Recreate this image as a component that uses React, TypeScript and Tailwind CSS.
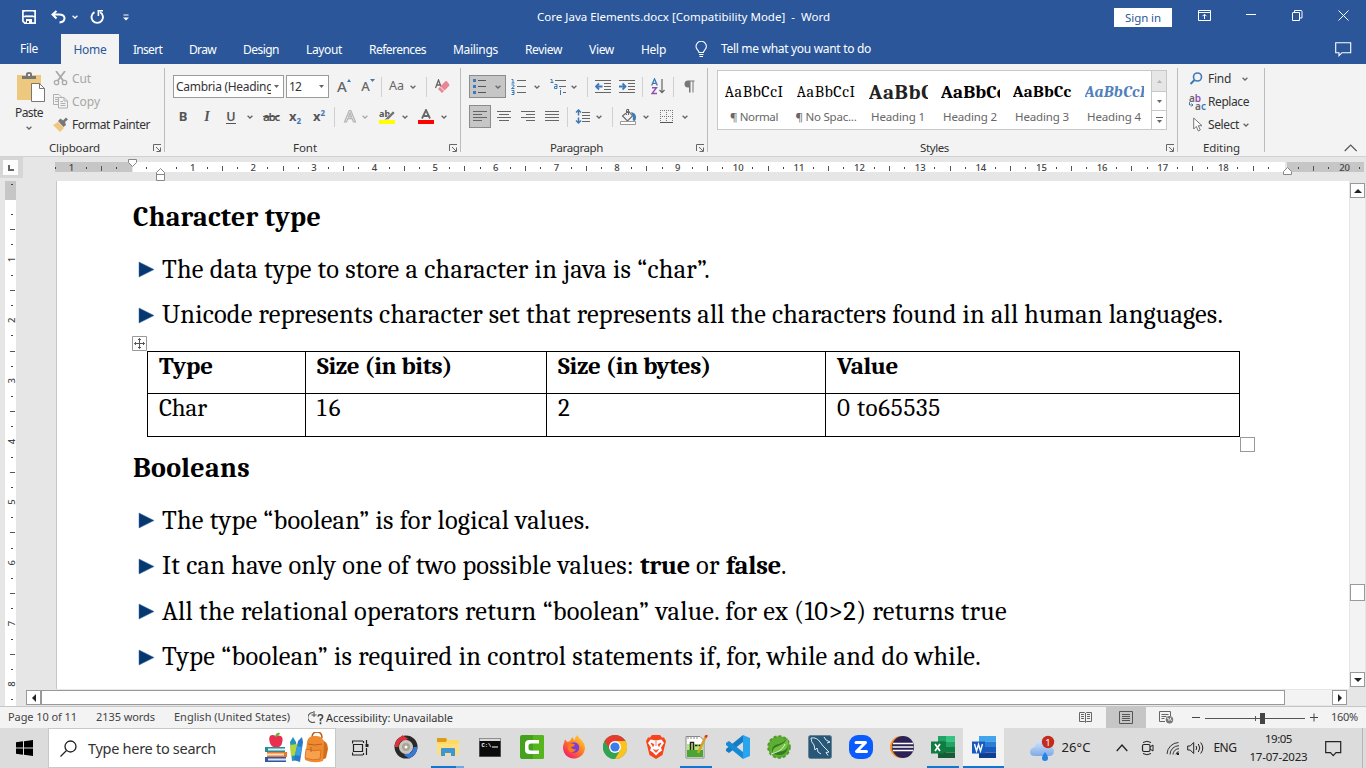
import React, { useLayoutEffect, useRef } from "react";

type P = { children?: React.ReactNode; className?: string };

/* Text run whose tracking is computed so that it spans a given width. */
function Fit({ w, className = "", children }: P & { w: number }) {
  const ref = useRef<HTMLSpanElement>(null);
  useLayoutEffect(() => {
    const el = ref.current;
    if (!el) return;
    el.style.letterSpacing = "0px";
    const natural = el.getBoundingClientRect().width;
    const n = (el.textContent || " ").length;
    el.style.letterSpacing = (w - natural) / n + "px";
  }, [w]);
  return (
    <span ref={ref} className={"inline-block shrink-0 whitespace-nowrap " + className}>
      {children}
    </span>
  );
}

function Ic({ w, h, className = "", children }: P & { w: number; h: number }) {
  return (
    <svg width={w} height={h} viewBox={`0 0 ${w} ${h}`} fill="none" className={"block shrink-0 " + className}>
      {children}
    </svg>
  );
}

const Cell = ({ className = "", children }: P) => (
  <div className={"flex h-full shrink-0 items-center justify-center " + className}>{children}</div>
);

const Chev = ({ className = "", c = "#666" }: { className?: string; c?: string }) => (
  <Cell className={"w-2 " + className}>
    <Ic w={6} h={4}>
      <path d="M.6.7 3 3 5.4.7" stroke={c} strokeWidth="1.3" />
    </Ic>
  </Cell>
);

const Sep = ({ className = "" }: P) => <div className={"h-5 w-px shrink-0 bg-[#d0d0d0] " + className} />;

const Launcher = ({ className = "" }: P) => (
  <Ic w={9} h={9} className={className}>
    <path d="M.5 7V.5H8M3 3l4 4M7.500 3.500v4h-4" stroke="#666" />
  </Ic>
);

function Group({ className = "", label, lw, pad, launcher = true, children }: P & { label: string; lw: number; pad: string; launcher?: boolean }) {
  return (
    <div className={"flex h-[92px] shrink-0 " + className}>
      <div className="flex min-w-0 flex-1 flex-col">
        <div className="h-[76px]">{children}</div>
        <div className={"flex h-4 items-center " + pad}>
          <Fit w={lw} className="text-[11.5px] leading-4 text-[#333]">{label}</Fit>
          {launcher && <Launcher className="mr-[2px] ml-auto" />}
        </div>
      </div>
      <div className="mt-1 h-[84px] w-px bg-[#bcbcbc]" />
    </div>
  );
}

function TitleBar() {
  return (
    <div className="flex h-[34px] items-center text-white">
      <Ic w={14} h={14} className="ml-[22px]">
        <path d="M.9.9h12.200v12.200H2.800L.9 11.200z" stroke="#fff" strokeWidth="1.7" />
        <path d="M3 1h8v5H3zM4 9h6v4H4z" fill="#fff" />
        <path d="M3 1.500h8v4H3z" fill="#2b579a" />
        <path d="M5 11h2v2H5z" fill="#2b579a" />
        <path d="M1 6.500h12" stroke="#fff" strokeWidth="1.500" />
      </Ic>
      <Ic w={15} h={14} className="ml-[15px]">
        <path d="M5.500 1 1.500 4.500l4 4M1.500 4.500h6.500c7.500 0 7 7.500.5 8" stroke="#fff" strokeWidth="2" />
      </Ic>
      <Chev c="#fff" className="ml-[5px]" />
      <Ic w={14} h={14} className="ml-[11px]">
        <path d="M4.500 2.200a5.700 5.700 0 1 0 5.500 0" stroke="#fff" strokeWidth="1.900" />
        <path d="M7.500.8h5.500M8.400.5v5.500" stroke="#fff" strokeWidth="1.600" />
      </Ic>
      <Ic w={6} h={7} className="ml-[19px]">
        <path d="M.5 1h5" stroke="#fff" />
        <path d="M0 3.500h6L3 6.500z" fill="#fff" />
      </Ic>
      <Fit w={293} className="ml-[408px] text-[11.5px]">Core Java Elements.docx [Compatibility Mode]&nbsp; -&nbsp; Word</Fit>
      <div className="ml-[284px] flex h-[19px] w-[58px] items-center justify-center bg-white pt-px">
        <Fit w={36} className="text-[11.5px] text-[#2b579a]">Sign in</Fit>
      </div>
      <Ic w={13} h={11} className="mb-1 ml-[26px]">
        <path d="M.5.5h12v10H.5zM.5 2.500h12M6.500 9V4.500M4.500 6.200l2-2 2 2" stroke="#fff" />
      </Ic>
      <Ic w={10} h={11} className="mb-1 ml-[35px]"><path d="M0 4.500h10" stroke="#fff" /></Ic>
      <Ic w={11} h={11} className="mb-1 ml-[36px]">
        <path d="M.5 3A.5.5 0 0 1 1 2.500h6.500V10.500H.5zM2.500 2.500v-2H9a1 1 0 0 1 1 1V8H8" stroke="#fff" />
      </Ic>
      <Ic w={11} h={11} className="mb-1 ml-[35px]"><path d="m.5.5 10 10m0-10-10 10" stroke="#fff" /></Ic>
    </div>
  );
}

function Tabs() {
  const rest: [string, number][] = [["Insert", 29], ["Draw", 27], ["Design", 36], ["Layout", 36], ["References", 57], ["Mailings", 45], ["Review", 37], ["View", 25], ["Help", 25]];
  return (
    <div className="flex h-[30px] items-center text-[12px] text-white">
      <Fit w={18} className="ml-5">File</Fit>
      <div className="ml-[23px] flex h-full w-[58px] items-center justify-center bg-[#f3f3f3] pt-[2px] text-[#2b579a]">
        <Fit w={33}>Home</Fit>
      </div>
      <div className="ml-[14px] flex items-center gap-[27px] pt-[2px]">
        {rest.map(([t, w]) => <Fit key={t} w={w}>{t}</Fit>)}
      </div>
      <Ic w={13} h={17} className="ml-[29px]">
        <path d="M4 11.500c0-2-3-3-3-6a5.200 5.200 0 0 1 10.400 0c0 3-3 4-3 6zM4 13.500h4.500M4.500 15.500h3.500" stroke="#fff" strokeWidth="1.100" />
      </Ic>
      <Fit w={150} className="ml-[13px]">Tell me what you want to do</Fit>
      <Ic w={17} h={15} className="ml-[464px]">
        <path d="M.7.7h15v10H7l-3 3v-3H.7z" stroke="#fff" strokeWidth="1.100" />
      </Ic>
    </div>
  );
}

function Clipboard() {
  return (
    <Group className="w-[165px]" label="Clipboard" lw={51} pad="pl-[49px]">
      <div className="flex h-full text-[12px]">
        <div className="flex w-[53px] flex-col pt-2 pl-[15px]">
          <Ic w={30} h={31} className="ml-[1px]">
            <path d="M1 3h24v25H1z" fill="#edc87e" />
            <path d="M6 7V4h4V2q0-2 3-2t3 2v2h4v3z" fill="#777" />
            <path d="M12 2h2v2h-2z" fill="#f3f3f3" />
            <path d="M15.500 11.500h8l5 5v13h-13z" fill="#fff" stroke="#777" />
            <path d="M23.500 11.500v5h5" stroke="#777" />
          </Ic>
          <Fit w={28} className="mt-px self-start leading-[18px] text-[#333]">Paste</Fit>
          <div className="flex h-3 w-7 justify-center"><Chev /></div>
        </div>
        <div className="flex flex-col pt-[3px]">
          <div className="flex h-[23px] items-center gap-1 text-[#a6a6a6]">
            <Ic w={15} h={15}>
              <path d="m3 0 7.500 10M12 0 4.500 10" stroke="#aaa" strokeWidth="1.800" />
              <circle cx="3.500" cy="11.500" r="2.200" stroke="#aaa" strokeWidth="1.300" />
              <circle cx="11.500" cy="11.500" r="2.200" stroke="#aaa" strokeWidth="1.300" />
            </Ic>
            <Fit w={19}>Cut</Fit>
          </div>
          <div className="flex h-[23px] items-center gap-1 text-[#a6a6a6]">
            <Ic w={15} h={15}>
              <path d="M5 10.500H.5V.5H6L8.500 3M2 3.500h3M2 5.500h3M2 7.500h3" stroke="#b0b0b0" />
              <path d="M5.500 3.500h5.500l3.500 3.500v7h-9zM11 3.500V7h3.500M7.500 7.500H10M7.500 9.500h5M7.500 11.500h5" stroke="#b0b0b0" />
            </Ic>
            <Fit w={28}>Copy</Fit>
          </div>
          <div className="flex h-[23px] items-center gap-1 text-[#333]">
            <Ic w={15} h={15}>
              <path d="m0 8 5-3 6 6-4 4z" fill="#edc87e" />
              <path d="m5 4 2.500-2.500 2.500 2L13 .5l2 2L12 5l1 3-2.500 2z" fill="#777" />
            </Ic>
            <Fit w={78}>Format Painter</Fit>
          </div>
        </div>
      </div>
    </Group>
  );
}

const Combo = ({ className = "", children }: P) => (
  <div className={"flex h-[23px] shrink-0 items-center border border-[#9a9a9a] bg-white " + className}>
    <div className="min-w-0 flex-1 overflow-hidden pl-[2px] text-[12px] text-[#333]">{children}</div>
    <Ic w={5} h={3} className="mr-1 ml-[3px]"><path d="M0 0h5L2.500 3z" fill="#666" /></Ic>
  </div>
);

function FontGroup() {
  return (
    <Group className="w-[296px]" label="Font" lw={24} pad="pl-[128px]">
      <div className="pt-[10px] pl-2">
        <div className="flex h-[25px] items-center text-[#666]">
          <Combo className="w-[111px]"><Fit w={106}>Cambria (Headings)</Fit></Combo>
          <Combo className="ml-[2px] w-[43px]"><Fit w={12}>12</Fit></Combo>
          <Cell className="ml-2 w-[14px] text-[15px] font-medium">
            A<Ic w={4} h={3} className="mb-3"><path d="M0 3h4L2 0z" fill="#3f7ab8" /></Ic>
          </Cell>
          <Cell className="ml-[10px] w-[14px] text-[13px] font-medium">
            A<Ic w={5} h={3} className="mb-3"><path d="M0 0h5L2.500 3z" fill="#3f7ab8" /></Ic>
          </Cell>
          <Sep className="ml-[6px]" />
          <Fit w={15} className="ml-[7px] text-[12.5px]">Aa</Fit>
          <Chev className="ml-[5px]" />
          <Sep className="ml-[9px]" />
          <Ic w={15} h={15} className="ml-[8px]">
            <path d="m.5 9 3-8 3 8M1.500 6h4" stroke="#666" strokeWidth="1.300" />
            <path d="m3 10 7-7.500q1-1 2 0l2 2.500q1 1 0 2l-7 7z" fill="#eb8591" />
            <path d="m5 7.500 4.500 4.500" stroke="#f3f3f3" />
          </Ic>
        </div>
        <div className="mt-[5px] -ml-[2px] flex h-[25px] items-center text-[13px] text-[#555]">
          <Cell className="w-6 font-bold">B</Cell>
          <Cell className="w-6 font-['Liberation_Serif'] text-[14px] font-bold italic">I</Cell>
          <Cell className="w-6"><span className="border-b border-[#555] text-[12.5px] leading-[13px] font-semibold">U</span></Cell>
          <Chev className="ml-[3px]" />
          <Cell className="ml-[5px] w-[24px]"><Fit w={16} className="text-[11.500px] font-semibold line-through">abc</Fit></Cell>
          <Cell className="w-[24px] font-bold">x<span className="mt-2 text-[8px] text-[#3f7ab8]">2</span></Cell>
          <Cell className="w-[24px] font-bold">x<span className="mb-2 text-[8px] text-[#3f7ab8]">2</span></Cell>
          <Sep className="ml-[3px]" />
          <Ic w={14} h={15} className="ml-2">
            <path d="M1.500 13 6.200 1.500h1.600L12.500 13h-2l-1.300-3.300H4.800L3.500 13zM5.500 7.800h3L7 4z" stroke="#b3b3b3" strokeWidth="1.200" />
          </Ic>
          <Chev c="#aaa" className="ml-1" />
          <Ic w={16} h={15} className="ml-[10px]">
            <text x="0" y="8" fontSize="9" fontWeight="700" fill="#555" fontFamily="Noto Sans">ab</text>
            <path d="m14 2 2 2-6.500 6.500-4.500.5z" fill="#777" stroke="#f3f3f3" strokeWidth=".6" />
            <path d="M0 11h16v4H0z" fill="#ff0" />
          </Ic>
          <Chev className="ml-[6px]" />
          <Ic w={16} h={15} className="ml-[9px]">
            <path d="M4 9.500 8 1l4 8.500M5.500 7h5" stroke="#666" strokeWidth="1.800" />
            <path d="M0 11h16v4H0z" fill="red" />
          </Ic>
          <Chev className="ml-[6px]" />
        </div>
      </div>
    </Group>
  );
}

const Lines = ({ d }: { d: string }) => <Ic w={14} h={13}><path d={d} stroke="#666" /></Ic>;

function ParagraphGroup() {
  return (
    <Group className="w-[247px]" label="Paragraph" lw={53} pad="pl-[89px]">
      <div className="pt-[10px] pl-2">
        <div className="flex h-[25px] items-center">
          <div className="flex h-[23px] w-[37px] shrink-0 items-center border border-[#8c8c8c] bg-[#c6c6c6] pl-[3px]">
            <Ic w={14} h={17}>
              <path d="M5 2.500h8M5 8.500h8M5 14.500h8" stroke="#555" />
              <path d="M0 1h3v3H0zM0 7h3v3H0zM0 13h3v3H0z" fill="#3f7ab8" />
            </Ic>
            <Chev className="ml-[7px]" />
          </div>
          <Ic w={15} h={17} className="ml-[5px]">
            <path d="M6 2.500h9M6 8.500h9M6 14.500h9" stroke="#666" />
            <path d="M.5 1.500H2V5M.5 5h3M.5 7h2.500v1.500L.5 10.500h3M.5 12.500H3v4H.5M1 14.500h2" stroke="#3f7ab8" />
          </Ic>
          <Chev className="ml-[7px]" />
          <Ic w={17} h={17} className="ml-[9px]">
            <path d="M5 2.500h11M9 8.500h7M13 14.500h3" stroke="#666" />
            <path d="M.5 1.500H2V5M.5 4.500h3M4.500 6.500h2.500v4H4.500v-2H7M10.500 12v5M10.500 10v1" stroke="#3f7ab8" />
          </Ic>
          <Chev className="ml-[3px]" />
          <Sep className="ml-[9px]" />
          <Ic w={16} h={13} className="ml-[7px]">
            <path d="M0 .5h16M9 3.500h7M9 6.500h7M9 9.500h7M0 12.500h16" stroke="#666" />
            <path d="M7.500 6.500H1.500M4 3.500l-3 3 3 3" stroke="#3f7ab8" strokeWidth="1.800" />
          </Ic>
          <Ic w={16} h={13} className="ml-[8px]">
            <path d="M0 .5h16M9 3.500h7M9 6.500h7M9 9.500h7M0 12.500h16" stroke="#666" />
            <path d="M0 6.500h6M3.500 3.500l3 3-3 3" stroke="#3f7ab8" strokeWidth="1.800" />
          </Ic>
          <Sep className="ml-[7px]" />
          <Ic w={14} h={17} className="ml-[8px]">
            <path d="M.7 7.500 3.500.8l2.800 6.700M1.700 5.300h3.700" stroke="#3f7ab8" strokeWidth="1.300" />
            <path d="M1 9.700h4.500L1 15.500h5" stroke="#8f4fb0" strokeWidth="1.400" />
            <path d="M11 1v13.500M8.500 12l2.500 2.700 2.500-2.700" stroke="#666" strokeWidth="1.200" />
          </Ic>
          <Sep className="ml-[8px]" />
          <Ic w={11} h={13} className="ml-[10px]">
            <path d="M5 7.500H4A3.500 3.500 0 0 1 4 .5h6.500v1H9.500V12.500h-1v-11h-2v11H5z" fill="#777" />
          </Ic>
        </div>
        <div className="mt-[5px] flex h-[25px] items-center">
          <div className="flex h-[23px] w-[22px] shrink-0 items-center justify-center border border-[#8c8c8c] bg-[#c6c6c6]">
            <Lines d="M0 1.500h14M0 4.500h9M0 7.500h14M0 10.500h9" />
          </div>
          <div className="ml-[6px] flex gap-[10px]">
            <Lines d="M0 1.500h14M2 4.500h10M0 7.500h14M2 10.500h10" />
            <Lines d="M0 1.500h14M5 4.500h9M0 7.500h14M5 10.500h9" />
            <Lines d="M0 1.500h14M0 4.500h14M0 7.500h14M0 10.500h14" />
          </div>
          <Sep className="ml-[8px]" />
          <Ic w={15} h={15} className="ml-[7px]">
            <path d="M3.500 1v5.500M1 3.500 3.500 1 6 3.500M3.500 8.500V14M1 11.500 3.500 14 6 11.500" stroke="#3f7ab8" strokeWidth="1.500" />
            <path d="M7 3.500h8M7 6.500h8M7 9.500h8M7 12.500h8" stroke="#666" />
          </Ic>
          <Chev className="ml-[5px]" />
          <Sep className="ml-[9px]" />
          <Ic w={17} h={16} className="ml-[7px]">
            <path d="m2.500 7 6-5 4 5-5 5zM6.500 6V2q0-2 2-1.500V6" stroke="#666" strokeWidth="1.100" />
            <path d="M11 3q5 1 5 5t-2 4q-2-1-1-4z" fill="#3f7ab8" />
            <path d="M.5 12.500h15v3H.5z" fill="#fff" stroke="#999" />
          </Ic>
          <Chev className="ml-[5px]" />
          <Ic w={13} h={13} className="ml-[10px]">
            <path d="M0 .5h13M.5 0v13M12.500 0v13M6.500 0v13M0 6.500h13" stroke="#777" strokeDasharray="1 1" />
            <path d="M0 12.500h13" stroke="#555" />
          </Ic>
          <Chev className="ml-[8px]" />
        </div>
      </div>
    </Group>
  );
}

const serif = "font-[Cambria,Caladea,'Liberation_Serif',serif]";

function Styles() {
  const items: [string, string, string, number, number][] = [
    ["AaBbCcI", "¶ Normal", "text-[16px] text-black", 59, 48],
    ["AaBbCcI", "¶ No Spac...", "text-[16px] text-black", 59, 61],
    ["AaBbCc", "Heading 1", "text-[21px] font-bold text-[#222]", 75, 54],
    ["AaBbCc", "Heading 2", "text-[19px] font-bold text-black", 65, 54],
    ["AaBbCc", "Heading 3", "text-[17px] font-bold text-black", 59, 54],
    ["AaBbCcI", "Heading 4", "text-[16px] font-bold italic text-[#4f81bd]", 61, 54],
  ];
  return (
    <Group className="w-[470px]" label="Styles" lw={29} pad="pl-[212px]">
      <div className="pt-[6px] pl-[9px]">
        <div className="flex h-[60px] w-[450px] border border-[#c8c8c8] bg-white">
          {items.map(([s, l, c, w, lw]) => (
            <div key={l} className="flex w-[72px] shrink-0 flex-col items-center">
              <div className="mt-[8px] h-[28px] w-[59px] overflow-hidden">
                <Fit w={w} className={"leading-[26px] " + serif + " " + c}>{s}</Fit>
              </div>
              <Fit w={lw} className="mt-[2px] text-[11.500px] leading-4 text-[#666]">{l}</Fit>
            </div>
          ))}
          <div className="ml-auto flex w-[15px] flex-col border-l border-[#c8c8c8]">
            <div className="flex h-[21px] items-center justify-center border-b border-[#c8c8c8] bg-[#e6e6e6]">
              <Ic w={5} h={3}><path d="M0 3h5L2.500 0z" fill="#b5b5b5" /></Ic>
            </div>
            <div className="flex h-[19px] items-center justify-center border-b border-[#c8c8c8]">
              <Ic w={5} h={3}><path d="M0 0h5L2.500 3z" fill="#666" /></Ic>
            </div>
            <div className="flex flex-1 items-center justify-center">
              <Ic w={7} h={7}><path d="M0 .5h7" stroke="#666" /><path d="M1 3h5L3.500 6z" fill="#666" /></Ic>
            </div>
          </div>
        </div>
      </div>
    </Group>
  );
}

function Editing() {
  return (
    <Group className="w-[87px]" label="Editing" lw={37} pad="pl-[25px]" launcher={false}>
      <div className="flex flex-col pt-[3px] pl-[11px] text-[12px] text-[#333]">
        <div className="flex h-[23px] items-center">
          <Ic w={16} h={13}><circle cx="8.500" cy="5" r="4" stroke="#3f7ab8" strokeWidth="1.600" /><path d="m5.500 8-4 4" stroke="#3f7ab8" strokeWidth="2" /></Ic>
          <Fit w={23} className="ml-[3px]">Find</Fit>
          <Chev className="ml-[10px]" />
        </div>
        <div className="flex h-[23px] items-center">
          <div className="w-[17px] shrink-0 text-[10px] leading-[8px] font-semibold text-[#666]">
            <div className="flex">a<span className="text-[#8f4fb0]">b</span></div>
            <div className="flex justify-end">
              <Ic w={5} h={6} className="mr-px"><path d="M.5 0v3H4M2.500 1.500l1.500 1.500-1.500 1.500" stroke="#3f7ab8" /></Ic>
              a<span className="text-[#3f7ab8]">c</span>
            </div>
          </div>
          <Fit w={41} className="ml-[2px]">Replace</Fit>
        </div>
        <div className="flex h-[23px] items-center">
          <Ic w={13} h={15} className="ml-[4px]"><path d="M.7 1v11l2.600-2.600 2 4.600 2-1-2-4.300h3.700z" fill="#fff" stroke="#777" /></Ic>
          <Fit w={31} className="ml-[2px]">Select</Fit>
          <Chev className="ml-[3px]" />
        </div>
      </div>
    </Group>
  );
}

const U = 60.63;

function Ruler() {
  const marks: React.ReactNode[] = [];
  for (let q = -5; q <= 81; q++) {
    const x = 77 + (q * U) / 4;
    if (x > 1308 || q === 0 || q === 76 || q === 2) continue;
    if (q % 4 === 0)
      marks.push(<text key={q} x={x} y="9" fontSize="9.500" fontWeight="500" textAnchor="middle" fill="#444">{Math.abs(q / 4)}</text>);
    else if (q % 2 === 0) marks.push(<path key={q} d={`M${Math.round(x) - 0.5} 4v5`} stroke="#555" />);
    else marks.push(<path key={q} d={`M${Math.round(x) - 0.5} 5v2`} stroke="#444" />);
  }
  return (
    <div className="flex h-[24px] bg-[#e6e6e6]">
      <div className="flex h-[21px] w-[23px] items-center justify-center bg-[#d6d6d6] pr-[2px]">
        <div className="flex h-[15px] w-[15px] items-center justify-center bg-[#fcfcfc]">
          <Ic w={6} h={6}><path d="M1 0v5h5" stroke="#666" strokeWidth="2" /></Ic>
        </div>
      </div>
      <svg width="1309" height="24" viewBox="0 -5 1309 24" className="ml-8 block" fill="none">
        <path d="M0 0h77v10H0zM1232 0h77v10h-77z" fill="#c6c6c6" />
        <path d="M78 0h1152v10H78z" fill="#fff" />
        {marks}
        <path d="M73.500-2.500h8v3l-4 4-4-4z" fill="#fff" stroke="#888" />
        <path d="M101.500 18.500v-8l4-4 4 4v8zM101.500 12.500h8" fill="#fff" stroke="#888" />
        <path d="M1228.500 12.500v-3l4-4 4 4v3z" fill="#fff" stroke="#888" />
      </svg>
    </div>
  );
}

function SideRuler() {
  const marks: React.ReactNode[] = [];
  for (let q = -1; q <= 33; q++) {
    const y = 18 + (q * U) / 4;
    if (q === 0) continue;
    if (q % 4 === 0)
      marks.push(<text key={q} x="0" y="0" fontSize="9.500" fontWeight="500" textAnchor="middle" fill="#444" transform={`translate(9.500 ${y}) rotate(-90)`}>{q / 4}</text>);
    else if (q % 2 === 0) marks.push(<path key={q} d={`M5 ${Math.round(y) + 0.5}h5`} stroke="#555" />);
    else marks.push(<path key={q} d={`M6 ${Math.round(y) + 0.5}h2`} stroke="#444" />);
  }
  return (
    <svg width="11" height="525" viewBox="0 0 11 525" className="ml-[5px] block shrink-0" fill="none">
      <path d="M0 0h11v525H0z" fill="#fff" />
      <path d="M0 0h11v19H0z" fill="#c6c6c6" />
      {marks}
    </svg>
  );
}

const Item = ({ w, tail, children }: P & { w: number; tail?: React.ReactNode }) => (
  <div className="flex h-[45.5px] items-center">
    <Ic w={17} h={17} className="ml-[4.500px]">
      <path d="M1 1v15l15-7.500z" fill="#06386f" stroke="#3f6ea5" strokeWidth=".5" />
    </Ic>
    <Fit w={w} className="ml-[7.500px]">{children}</Fit>
    {tail}
  </div>
);

const Heading = ({ w, children }: P & { w: number }) => (
  <div className="flex h-[46px] items-center pt-px text-[28px] font-bold"><Fit w={w}>{children}</Fit></div>
);

function Doc() {
  const td = "border-r border-b border-black pl-[11px] h-full";
  return (
    <div className={"h-[508px] w-[1293px] border-l border-[#c6c6c6] bg-white pt-[12px] pl-[76px] text-[26.4px] text-black " + serif}>
      <Heading w={188}>Character type</Heading>
      <div className="mt-[8px]">
        <Item w={548}>The data type to store a character in java is “char”.</Item>
        <Item w={1061}>Unicode represents character set that represents all the characters found in all human languages.</Item>
      </div>
      <div className="relative mt-[13px] ml-[14px] w-[1093px] border-t border-l border-black text-[25px] leading-[28px]">
        <div className="absolute -top-[16px] -left-[16px]">
          <Ic w={15} h={15}>
            <path d="M.5.5h14v14H.5z" fill="#fff" stroke="#999" />
            <path d="M7.500 2.500v10M2.500 7.500h10M6 4l1.500-1.500L9 4M6 11l1.500 1.500L9 11M4 6 2.500 7.500 4 9M11 6l1.500 1.500L11 9" stroke="#555" />
          </Ic>
        </div>
        <div className="grid h-[42px] grid-cols-[158px_241px_279px_414px] font-bold">
          <div className={td}><Fit w={54}>Type</Fit></div>
          <div className={td}><Fit w={135}>Size (in bits)</Fit></div>
          <div className={td}><Fit w={153}>Size (in bytes)</Fit></div>
          <div className={td}><Fit w={61}>Value</Fit></div>
        </div>
        <div className="grid h-[43px] grid-cols-[158px_241px_279px_414px]">
          <div className={td}><Fit w={48}>Char</Fit></div>
          <div className={td}><Fit w={26}>16</Fit></div>
          <div className={td}><Fit w={13}>2</Fit></div>
          <div className={td}><Fit w={104}>0 to65535</Fit></div>
        </div>
        <div className="absolute top-[85px] -right-[15px] h-[15px] w-[15px] border border-[#999] bg-white" />
      </div>
      <div className="mt-[7px]"><Heading w={117}>Booleans</Heading></div>
      <div className="mt-[8px]">
        <Item w={428}>The type “boolean” is for logical values.</Item>
        <Item
          w={472}
          tail={
            <>
              <Fit w={50} className="ml-[6px] font-bold">true</Fit>
              <Fit w={24} className="ml-[6px]">or</Fit>
              <Fit w={55} className="ml-[6px] font-bold">false</Fit>
              <Fit w={6}>.</Fit>
            </>
          }
        >
          It can have only one of two possible values:
        </Item>
        <Item w={845}>All the relational operators return “boolean” value. for ex (10&gt;2) returns true</Item>
        <Item w={819}>Type “boolean” is required in control statements if, for, while and do while.</Item>
      </div>
    </div>
  );
}

const SBox = ({ className = "h-[15px]", children }: P) => (
  <div className={"flex w-[15px] shrink-0 items-center justify-center border border-[#999] bg-white " + className}>{children}</div>
);

function Workspace() {
  return (
    <div className="flex h-[525px] bg-[#e6e6e6]">
      <SideRuler />
      <div className="w-[10px]" />
      <div className="flex w-[1323px] flex-col">
        <div className="flex pl-[30px]"><Doc /></div>
        <div className="mt-px flex h-[15px] w-[1321px] bg-[#f3f3f3]">
          <SBox><Ic w={4} h={8}><path d="M4 0v8L0 4z" fill="#222" /></Ic></SBox>
          <div className="h-[15px] w-[1244px] border border-[#999] bg-white" />
          <SBox className="ml-auto h-[15px]"><Ic w={4} h={8}><path d="M0 0v8l4-4z" fill="#222" /></Ic></SBox>
        </div>
      </div>
      <div className="mt-[2px] ml-px flex h-[504px] w-[15px] flex-col bg-[#f3f3f3]">
        <SBox><Ic w={8} h={4}><path d="M0 4h8L4 0z" fill="#222" /></Ic></SBox>
        <SBox className="mt-[386px] h-[17px]" />
        <SBox className="mt-auto h-[15px]"><Ic w={8} h={4}><path d="M0 0h8L4 4z" fill="#222" /></Ic></SBox>
      </div>
    </div>
  );
}

function StatusBar() {
  return (
    <div className="flex h-[22px] items-center border-t border-[#c6c6c6] bg-[#f3f3f3] text-[11px] text-[#444]">
      <Fit w={69} className="ml-2">Page 10 of 11</Fit>
      <Fit w={59} className="ml-[19px]">2135 words</Fit>
      <Fit w={116} className="ml-[19px]">English (United States)</Fit>
      <Ic w={16} h={15} className="ml-[18px]">
        <path d="M5 2.500A5 5 0 1 0 7 12M6 1v6M3.500 5h5" stroke="#555" strokeWidth="1.100" />
        <path d="M10 6.500q.5-2 2.500-1.800 2.500.3 2 2.500-.4 1.500-2 2v2M12.500 12.300v2" stroke="#444" strokeWidth="1.600" />
      </Ic>
      <Fit w={127} className="mt-[2px] ml-[2px] text-[#333]">Accessibility: Unavailable</Fit>
      <Ic w={13} h={13} className="ml-[626px]">
        <path d="M.5 1.500h5l1 1 1-1h5v9h-5l-1 1-1-1h-5zM6.500 2v9M2 3.500h3M2 5.500h3M2 7.500h3M8 3.500h3M8 5.500h3M8 7.500h3" stroke="#666" />
      </Ic>
      <div className="ml-[14px] flex h-[21px] w-10 items-center justify-center bg-[#c6c6c6]">
        <Ic w={14} h={13}><path d="M.5.5h13v12H.5zM3 3.500h8M3 5.500h8M3 7.500h8M3 9.500h8" stroke="#555" /></Ic>
      </div>
      <Ic w={15} h={13} className="ml-[13px]">
        <path d="M11.500 5V.5H.5v10H6M2.500 3.500h7M2.500 5.500h5M2.500 7.500h3" stroke="#666" />
        <circle cx="10.500" cy="8.800" r="3.700" fill="#777" />
        <path d="m8 7 2 1v2M12 6.500l-1 2 2 1" stroke="#eee" />
      </Ic>
      <Ic w={8} h={9} className="ml-[18px]"><path d="M0 4.500h8" stroke="#444" /></Ic>
      <Ic w={100} h={12} className="ml-[5px]">
        <path d="M0 6.500h100M50.500 4v5" stroke="#555" />
        <path d="M55 1h5v11h-5z" fill="#444" />
      </Ic>
      <Ic w={8} h={9} className="ml-[5px]"><path d="M0 4.500h8M4 .5v8" stroke="#444" /></Ic>
      <Fit w={27} className="ml-[13px]">160%</Fit>
    </div>
  );
}

const A = ({ children, sel, bar, className = "" }: P & { sel?: boolean; bar?: string }) => (
  <div className={"flex h-10 w-[41.300px] shrink-0 flex-col items-center " + (sel ? "bg-[#f3f3f3] " : "") + className}>
    <div className="flex h-[38px] items-center justify-center">{children}</div>
    {bar && <div className={"h-[2px] bg-[#0a78d4] " + bar} />}
  </div>
);

function Apps() {
  return (
    <div className="ml-[16px] flex">
      <A>
        <Ic w={24} h={24}>
          <circle cx="12" cy="12" r="9" stroke="#292929" strokeWidth="5" />
          <path d="M2.500 12A9.500 9.500 0 0 1 9 3" stroke="#e0303a" strokeWidth="4" />
          <path d="M21.500 12a9.500 9.500 0 0 1-6.500 9" stroke="#3979d8" strokeWidth="4" />
          <path d="m8 0 6 3.500L9 8z" fill="#e0303a" />
          <path d="m16 24-6-4 6-5z" fill="#3979d8" />
          <circle cx="12" cy="12" r="7" fill="#c9c6bd" /><circle cx="12" cy="12" r="4" fill="#a7a396" /><circle cx="12" cy="12" r="1.500" fill="#fff" />
        </Ic>
      </A>
      <A bar="w-[33px] border-r-8 border-[#6aaae4]" className="ml-px">
        <Ic w={22} h={20}>
          <path d="M0 1h9l2 2h11v15H0z" fill="#ffd966" /><path d="M0 1h9l1 2-1 2H0z" fill="#dc9b1b" /><path d="M0 7h22v11H0z" fill="#ffdf7c" />
          <path d="M4 19v-7q0-1 1-1h12q1 0 1 1v7h-4v-3H8v3z" fill="#3f95d6" />
        </Ic>
      </A>
      <A className="ml-px">
        <Ic w={22} h={19}>
          <path d="M0 0h22v19H0z" fill="#0b0b0b" stroke="#888" /><path d="M.5.5h21v2.500H.5z" fill="#d8d8d8" />
          <text x="2.500" y="9" fontSize="5.500" fontWeight="700" fill="#fff" fontFamily="Liberation Mono">C:\</text>
          <path d="M13 9h6" stroke="#fff" />
        </Ic>
      </A>
      <A>
        <Ic w={24} h={24}>
          <rect width="24" height="24" rx="2" fill="#44a11d" /><path d="M13 0h9q2 0 2 2v20q0 2-2 2h-9z" fill="#55b51d" />
          <path d="M19 5H9.500Q5 5 5 9v6q0 4 4.500 4H19v-3.500h-8Q8.500 15.500 8.500 13v-2q0-2.500 2.500-2.500h8z" fill="#fff" />
        </Ic>
      </A>
      <A className="ml-px">
        <Ic w={24} h={24}>
          <defs><linearGradient id="ff" x1="1" y1="0" x2="0.200" y2="1"><stop offset="0" stopColor="#ffe944" /><stop offset=".45" stopColor="#ff8a1f" /><stop offset="1" stopColor="#f5156c" /></linearGradient></defs>
          <path d="M3 4.500 5.500 7 8 6q1-3 3-4-.2 2.500 2 3.500Q12.500 2 15.500 0q1 3 4 5 3 3 3.500 8A11 11 0 1 1 2 8z" fill="url(#ff)" />
          <circle cx="12" cy="12.500" r="5.300" fill="#7a3fd6" />
          <path d="M6 10q3-2.500 7-.5-1 2.500-4 2.500 1 3 5 2-2 4-6 3-3-2-2-7" fill="#ff7a1c" />
        </Ic>
      </A>
      <A>
        <Ic w={24} h={24}>
          <circle cx="12" cy="12" r="12" fill="#34a350" />
          <path d="M12 12 1.600 6A12 12 0 0 1 22.400 6z" fill="#e33b2e" />
          <path d="M12 6h10.400A12 12 0 0 1 12 24l5.200-9z" fill="#fcc31e" />
          <path d="M1.600 6 6.800 15l5.200-3-2-6z" fill="#e33b2e" />
          <path d="M1.600 6 6.800 15H12v9A12 12 0 0 1 1.600 6z" fill="#34a350" />
          <circle cx="12" cy="12" r="6" fill="#fff" /><circle cx="12" cy="12" r="4.600" fill="#3a7de8" />
        </Ic>
      </A>
      <A>
        <Ic w={20} h={24}>
          <path d="m4 2.500 2-2.500h8l2 2.500h2L20 6l-.5 2-3 12L10 24l-6.500-4L.5 8 0 6l2-3.500z" fill="#f8441c" />
          <path d="m4.500 4.500 5.500 1 5.500-1L18 8l-3 4.500 1 3-3 2-3 3-3-3-3-2 1-3L2 8z" fill="#fff" />
          <path d="m5 8 3 1.500-1 2zM15 8l-3 1.500 1 2zM7.500 14.500l2.500 1 2.500-1-2.500 3zM10 6v5" fill="#f8441c" stroke="#f8441c" strokeWidth=".7" />
        </Ic>
      </A>
      <A bar="w-[32px]" className="-ml-[2px]">
        <Ic w={24} h={24}>
          <path d="M2 1.500h14l4 4V23H2z" fill="#fff" stroke="#888" />
          <path d="M3 9h16v13H3z" fill="#b4e678" /><path d="M3 15h16v7H3z" fill="#49a632" />
          <path d="M4 1v3M7 1v3M10 1v3M13 1v3" stroke="#888" />
          <path d="M6.500 15V7.500h3V15M11 10.500h2.500M14.500 10.500H17" stroke="#222" strokeWidth="1.500" />
          <path d="m22 1-8 17" stroke="#d6a22d" strokeWidth="2.500" /><path d="m22.700 0-1 2.500" stroke="#d33" strokeWidth="2.500" />
        </Ic>
      </A>
      <A className="ml-px">
        <Ic w={24} h={24}>
          <path d="m17 0 7 3v18l-7 3z" fill="#29a5ee" /><path d="M17 0v7L3 18l-3-2v-2z" fill="#147bc4" />
          <path d="m0 8 3-2 14 11v7L0 10z" fill="#168bd4" />
        </Ic>
      </A>
      <A>
        <Ic w={24} h={24}>
          <circle cx="12" cy="12" r="10.800" fill="#5eae32" stroke="#4f9b2a" strokeWidth="2" strokeDasharray="3 2" />
          <path d="M20 3c2 9 1 17-8 17-7 0-9-5-5-9 4-3 9-1 13-8" fill="#2f7a22" /><path d="M20.500 2.500c2 9-1 14-8 14-3 0-6 1-7 2 0-10 11-5 15-16" fill="#76c043" />
          <path d="M4 19c6-2 11-3 14-10" stroke="#e3f3d8" />
        </Ic>
      </A>
      <A className="-ml-px">
        <Ic w={24} h={24}>
          <rect x=".5" y=".5" width="23" height="23" rx="2" fill="#285777" stroke="#6a8394" />
          <path d="M3 3q6-1 9 4 2 3 5 6l4 4-3 .5 2 3M3 3q0 4 3 7l1 5 2-2 1 4 3 2M16 2l2 3 4 2-3 1" stroke="#dfe9ef" />
        </Ic>
      </A>
      <A>
        <Ic w={24} h={24}>
          <rect width="24" height="24" rx="9" fill="#0b5cff" />
          <path d="M7 7.500h9.500L7.500 16.500H17.500" stroke="#fff" strokeWidth="3" strokeLinejoin="round" strokeLinecap="round" />
        </Ic>
      </A>
      <A>
        <Ic w={24} h={22}>
          <circle cx="11" cy="11" r="11" fill="#f7941e" /><circle cx="13" cy="11" r="11" fill="#2c2255" />
          <path d="M3 7.500h20M2.500 11h21M3 14.500h20" stroke="#fff" strokeWidth="1.700" />
        </Ic>
      </A>
      <A bar="w-[32px]" className="-ml-px">
        <Ic w={24} h={22}>
          <path d="M7 0h8.500v11H7z" fill="#21a366" /><path d="M15 0h9v5.500h-9z" fill="#33c481" /><path d="M15 5.500h9V11h-9z" fill="#21a366" />
          <path d="M7 5.500h8V22H7z" fill="#107c41" /><path d="M15 11h9v5.500h-9z" fill="#107c41" /><path d="M7 16.500h17V22H7z" fill="#185c37" />
          <path d="M0 5.500h13v12H0z" fill="#107c41" /><path d="m4 8 5 7M9 8l-5 7" stroke="#fff" strokeWidth="1.700" />
        </Ic>
      </A>
      <A sel bar="w-full">
        <Ic w={24} h={22}>
          <path d="M7 0h17v5.500H7z" fill="#41a5ee" /><path d="M7 5.500h17V11H7z" fill="#2b7cd3" /><path d="M7 11h17v5.500H7z" fill="#185abd" /><path d="M7 16.500h17V22H7z" fill="#103f91" />
          <path d="M0 5.500h13v12H0z" fill="#185abd" /><path d="m2.500 8 2 7 2-6.500 2 6.500 2-7" stroke="#fff" strokeWidth="1.400" />
        </Ic>
      </A>
    </div>
  );
}

function Taskbar() {
  return (
    <div className="flex h-10 items-center bg-[#dcdcdc] text-[#222]">
      <Ic w={17} h={16} className="ml-4">
        <path d="m0 2.300 7-1V7.500H0zM8 1.200 17 0v7.500H8zM0 8.500h7v6.200l-7-1zM8 8.500h9V16l-9-1.200z" fill="#000" />
      </Ic>
      <div className="ml-[15px] flex h-10 w-[288px] items-center border border-[#c9c9c9] bg-white">
        <Ic w={17} h={17} className="ml-[11px]">
          <circle cx="10.500" cy="6.500" r="5.500" stroke="#222" strokeWidth="1.300" /><path d="M6.500 10.500.5 16.500" stroke="#222" strokeWidth="1.300" />
        </Ic>
        <Fit w={128} className="ml-[11px] pt-px text-[14.500px] text-[#333]">Type here to search</Fit>
        <Ic w={65} h={32} className="ml-[48px]">
          <path d="M12 4c-6-3-8 1-6 7 2 5 5 4 6 4s5 1 6-4c2-6-1-9-6-7" fill="#e8304e" /><path d="M11 5q1-5 5-4-1 3-5 4" fill="#62b33a" />
          <path d="M1 15h20v5H1z" fill="#2b8c98" /><path d="M4 16.500h17v2H4z" fill="#e6eef0" />
          <path d="M3 20h20v5H3z" fill="#e8782a" /><path d="M3 21.500h17v2H3z" fill="#fbe2cb" />
          <path d="M1 25h21v5H1z" fill="#2e58a6" /><path d="M4 26.500h18v2H4z" fill="#dbe4f4" />
          <path d="m26 10 3-5 3 5 2 18-6 1z" fill="#2295b8" /><path d="m26 13 7-1 1 11-7 1z" fill="#b4d63c" />
          <path d="m34 9 4-4 1 5-3 20-6-2z" fill="#2a78c8" /><path d="m33 14 5 1-2 9-5-1z" fill="#38a1df" />
          <path d="M48 6q0-6 5-6t5 6" stroke="#b9601c" strokeWidth="1.500" /><path d="M57 8q7 1 7 9l-2 9-6 3" fill="#d36d1c" />
          <path d="M43 10q1-7 9-6 8 0 8 8l-1 17q-9 3-18-1z" fill="#f08a30" />
          <path d="M42 17q8 3 15 1l-1 9q-7 2-15-1z" fill="#f8a14c" stroke="#c8661b" strokeWidth=".7" /><path d="M44 12q6 2 14 0M47 15v5" stroke="#b9601c" />
        </Ic>
      </div>
      <Ic w={17} h={16} className="ml-[16px]">
        <path d="M.5 3.500V1H11M.5 12.500V15H11M1.500 4.500h9v7h-9zM11.500 1v2M11.500 13v2M14.500 0v4M14.500 8v7" stroke="#222" strokeWidth="1.200" /><path d="M13.500 4h3v3h-3z" fill="#222" />
      </Ic>
      <Apps />
      <Ic w={25} h={26} className="ml-[26px]">
        <defs><linearGradient id="cl" x1="0" y1="0" x2="0" y2="1"><stop stopColor="#d5e7fb" /><stop offset="1" stopColor="#7faae8" /></linearGradient></defs>
        <path d="M5 21q-5 0-5-4t5-5q1-8 9-7 6 1 7 7 3 1 3 4 0 5-5 5z" fill="url(#cl)" />
        <path d="M15 17q3 4 3 6a3 3 0 0 1-6 0q0-2 3-6" fill="#2383e8" />
        <circle cx="18" cy="7" r="6.200" fill="#c42b1c" /><text x="18" y="10.500" fontSize="9.500" textAnchor="middle" fill="#fff">1</text>
      </Ic>
      <Fit w={29} className="ml-[6px] text-[13px]">26°C</Fit>
      <Ic w={12} h={8} className="ml-[26px]"><path d="m.7 7 5.300-6 5.300 6" stroke="#222" strokeWidth="1.300" /></Ic>
      <Ic w={13} h={16} className="ml-[13px]">
        <rect x="1.500" y="4.500" width="7.500" height="7" rx="1.500" stroke="#222" strokeWidth="1.200" /><path d="m9 7 3-2v6L9 9M2 2.500q4-2.500 8 0M2 13.500q4 2.500 8 0" stroke="#222" />
      </Ic>
      <Ic w={14} h={14} className="ml-[12px]">
        <path d="M1 13A12 12 0 0 1 12.500 1.500M4 13.500A9 9 0 0 1 13 4.700M7 13.500a6 6 0 0 1 6-5.800M10 13.500a3 3 0 0 1 3-2.700" stroke="#333" /><path d="M11 12h2v2h-2z" fill="#222" />
      </Ic>
      <Ic w={17} h={14} className="ml-[7px]">
        <path d="M.7 5h2.500l3.500-3.500v11L3.200 9H.7zM9 5q1.500 2 0 4M11.300 3q3 4 0 8M13.700 1.500q4.200 5.500 0 11" stroke="#222" />
      </Ic>
      <Fit w={23} className="ml-[9px] text-[12px]">ENG</Fit>
      <div className="ml-[12px] flex w-[60px] flex-col items-center text-[11.500px]">
        <Fit w={27} className="leading-[18px]">19:05</Fit>
        <Fit w={58} className="leading-[18px]">17-07-2023</Fit>
      </div>
      <Ic w={17} h={17} className="ml-[17px]"><path d="M.7 1.700h15v11H11l-2.800 3-2.700-3H.7z" stroke="#222" strokeWidth="1.200" /></Ic>
      <div className="ml-[20px] h-10 w-px bg-[#b5b5b5]" />
    </div>
  );
}

export default function App() {
  return (
    <div className="h-[768px] w-[1366px] overflow-hidden bg-[#e6e6e6] font-['Noto_Sans','Open_Sans',sans-serif]">
      <div className="h-[64px] bg-[#2b579a]">
        <TitleBar />
        <Tabs />
      </div>
      <div className="flex h-[93px] border-b border-[#d2d2d2] bg-[#f3f3f3]">
        <Clipboard />
        <FontGroup />
        <ParagraphGroup />
        <Styles />
        <Editing />
        <Ic w={13} h={8} className="mt-[80px] ml-[79px]"><path d="m.7 7 6-6 6 6" stroke="#555" strokeWidth="1.200" /></Ic>
      </div>
      <Ruler />
      <Workspace />
      <StatusBar />
      <Taskbar />
    </div>
  );
}
